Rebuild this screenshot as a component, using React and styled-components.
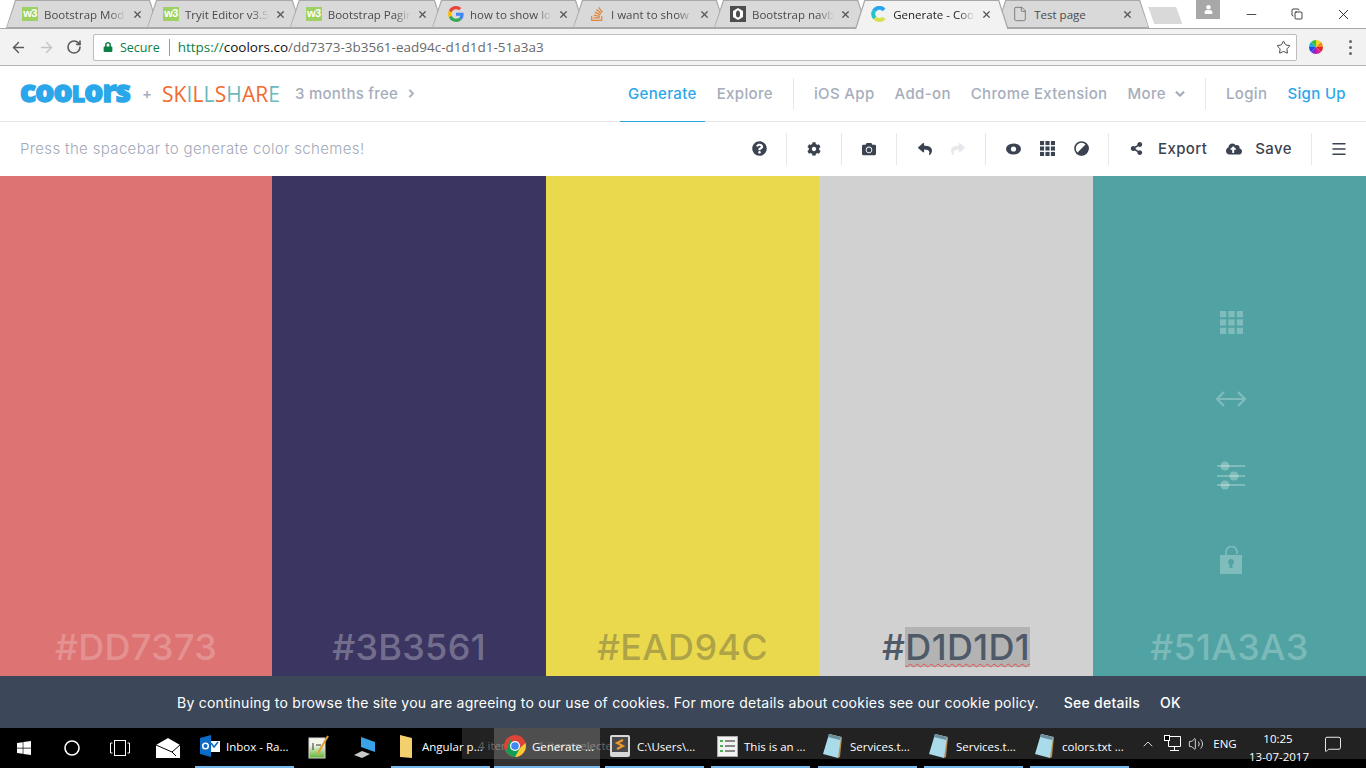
import React from "react";
import styled, { createGlobalStyle } from "styled-components";
import {
  ArrowLeft,
  ArrowRight,
  RotateCw,
  Star,
  File,
  X,
  Minus,
  Copy,
  ChevronUp,
  Volume2,
  MessageSquare,
  Menu,
} from "lucide-react";
import {
  FaQuestionCircle,
  FaCog,
  FaCamera,
  FaReply,
  FaShare,
  FaShareAlt,
  FaCloudUploadAlt,
  FaChevronRight,
  FaChevronDown,
  FaLock,
  FaWindows,
  FaUser,
  FaStackOverflow,
} from "react-icons/fa";

const GlobalStyle = createGlobalStyle`
  html, body {
    margin: 0;
    padding: 0;
    overflow: hidden;
    background: #fff;
  }
  * { box-sizing: border-box; }
`;

const Page = styled.div`
  width: 1366px;
  height: 768px;
  display: flex;
  flex-direction: column;
  font-family: Inter, "Liberation Sans", sans-serif;
`;

/* ---------- chrome window ---------- */
const TabStrip = styled.div`
  height: 28px;
  flex: none;
  display: flex;
  align-items: stretch;
  padding-left: 6px;
  background: #fff;
  position: relative;
  font-family: "Open Sans", "Liberation Sans", sans-serif;
`;

const Tab = styled.div`
  position: relative;
  flex: 0 0 153px;
  margin-right: -12px;
  padding: 0 16px;
  display: flex;
  align-items: center;
  gap: 6px;
  z-index: ${(p) => (p.$active ? 2 : 1)};
  font-size: 11.5px;
  color: ${(p) => (p.$active ? "#222" : "#4a4a4a")};

  &::before,
  &::after {
    content: "";
    position: absolute;
    z-index: -1;
    clip-path: polygon(0 100%, 9px 0, calc(100% - 9px) 0, 100% 100%);
  }
  &::before {
    inset: 0;
    background: #a8a8a8;
  }
  &::after {
    inset: 1px 1px ${(p) => (p.$active ? "-1px" : "1px")} 1px;
    background: ${(p) => (p.$active ? "#f2f2f2" : "#d9d9d9")};
  }
`;

const TabTitle = styled.span`
  flex: 1;
  min-width: 0;
  overflow: hidden;
  white-space: nowrap;
  mask-image: ${(p) =>
    p.$plain ? "none" : "linear-gradient(to right, #000 80%, transparent)"};
`;

const TabClose = styled(X)`
  flex: none;
  color: #555;
`;

const W3Icon = styled.span`
  flex: none;
  width: 16px;
  height: 14px;
  background: #9ed163;
  color: #fff;
  font: bold 11px "Liberation Sans", sans-serif;
  line-height: 13px;
  text-align: center;
  letter-spacing: -0.5px;
`;

const NewTab = styled.div`
  margin: 7px 0 4px 11px;
  width: 34px;
  height: 17px;
  flex: none;
  background: #d9d9d9;
  clip-path: polygon(0 0, calc(100% - 6px) 0, 100% 100%, 6px 100%);
`;

const ProfileBadge = styled.div`
  position: absolute;
  left: 1196px;
  top: 0;
  width: 24px;
  height: 19px;
  background: #a8a8a8;
  color: #fff;
  display: flex;
  align-items: center;
  justify-content: center;
`;

const WindowControls = styled.div`
  position: absolute;
  right: 0;
  top: 0;
  height: 28px;
  display: flex;
  align-items: center;
  color: #111;
`;

const WindowButton = styled.div`
  width: 46px;
  display: flex;
  justify-content: center;
`;

const Toolbar = styled.div`
  height: 38px;
  flex: none;
  background: #f2f2f2;
  border-top: 1px solid #a8a8a8;
  border-bottom: 1px solid #b5b5b5;
  display: flex;
  align-items: center;
  padding-left: 4px;
  color: #5a5a5a;
`;

const NavButton = styled.div`
  width: 28px;
  display: flex;
  justify-content: center;
  color: ${(p) => (p.$disabled ? "#c4c4c4" : "#5a5a5a")};
`;

const AddressBar = styled.div`
  margin-left: 5px;
  width: 1204px;
  height: 27px;
  background: #fff;
  border: 1px solid #bdbdbd;
  border-radius: 2px;
  display: flex;
  align-items: center;
  padding: 0 5px 0 9px;
  font-family: "Open Sans", "Liberation Sans", sans-serif;
  font-size: 12.5px;
`;

const Secure = styled.span`
  color: #0b8043;
  margin-left: 7px;
  padding-right: 9px;
  border-right: 1px solid #9a9a9a;
  line-height: 17px;
`;

const Url = styled.span`
  margin-left: 8px;
  color: #6a6a6a;
  flex: 1;
  font-size: 13.5px;
  & b {
    font-weight: 400;
    color: #0b8043;
  }
  & i {
    font-style: normal;
    color: #111;
  }
`;

const WheelSlot = styled.span`
  margin-left: 11px;
  display: flex;
`;

const MenuDots = styled.div`
  margin-left: 25px;
  display: flex;
  flex-direction: column;
  gap: 3px;
  & span {
    width: 3px;
    height: 3px;
    border-radius: 50%;
    background: #666;
  }
`;

/* ---------- coolors header ---------- */
const Header = styled.header`
  height: 56px;
  flex: none;
  border-bottom: 1px solid #e6e6e6;
  display: flex;
  align-items: center;
  padding-left: 20px;
  background: #fff;
  font-size: 15px;
  font-weight: 500;
  letter-spacing: 0.35px;
  color: #a6adbb;
`;

const Logo = styled.span`
  font-family: "Open Sans", sans-serif;
  font-weight: 800;
  font-size: 30px;
  line-height: 1;
  letter-spacing: -0.9px;
  color: #2aa7ea;
  -webkit-text-stroke: 1.3px #2aa7ea;
  width: 110px;
  margin-top: -6px;
  white-space: nowrap;
  & span {
    font-size: 23px;
    text-transform: uppercase;
  }
`;

const Plus = styled.span`
  margin-left: 12px;
  width: 20px;
`;

const SkillShare = styled.span`
  font-family: "Open Sans", sans-serif;
  font-size: 21px;
  font-weight: 500;
  letter-spacing: 0.1px;
  width: 133px;
  color: #f26b2d;
  & em {
    font-style: normal;
    color: #6db9bd;
  }
`;

const Promo = styled.span`
  display: flex;
  align-items: center;
  gap: 9px;
  letter-spacing: 0.25px;
  color: #a6adbb;
`;

const BoldChevron = styled(FaChevronRight)`
  stroke: currentColor;
  stroke-width: 40px;
`;

const BoldChevronDown = styled(FaChevronDown)`
  stroke: currentColor;
  stroke-width: 40px;
`;

const MainNav = styled.nav`
  margin-left: auto;
  align-self: stretch;
  display: flex;
  align-items: center;
  padding-right: 10px;
`;

const NavLink = styled.a`
  height: 100%;
  display: flex;
  align-items: center;
  gap: 9px;
  padding: 0 8px;
  margin: 0 2px;
  color: ${(p) => (p.$accent ? "#2aa7ea" : "#a6adbb")};
  border-bottom: ${(p) => (p.$active ? "1px solid #2aa7ea" : "none")};
  margin-bottom: ${(p) => (p.$active ? "-1px" : "0")};
`;

const NavDivider = styled.span`
  width: 1px;
  height: 32px;
  background: #e8e8e8;
  margin: 0 10px;
`;

const SubBar = styled.div`
  height: 54px;
  flex: none;
  background: #fff;
  display: flex;
  align-items: center;
  padding: 0 0 1px 20px;
  font-size: 15px;
  font-weight: 300;
  letter-spacing: 0.35px;
  color: #a3aaba;
`;

const ToolGroups = styled.div`
  margin-left: auto;
  height: 32px;
  display: flex;
  color: #3b4351;
`;

const ToolGroup = styled.div`
  width: ${(p) => p.$w}px;
  display: flex;
  align-items: center;
  justify-content: center;
  gap: ${(p) => p.$gap ?? 0}px;
  border-left: ${(p) => (p.$first ? "none" : "1px solid #e8e8e8")};
`;

const ExportGroup = styled.div`
  width: 203px;
  padding-left: 21px;
  display: flex;
  align-items: center;
  border-left: 1px solid #e8e8e8;
`;

const ToolLabel = styled.span`
  margin: 0 19px 0 ${(p) => p.$gap}px;
  font-size: 15px;
  font-weight: 500;
  letter-spacing: 0.4px;
  color: #3b4351;
`;

/* ---------- palette ---------- */
const Palette = styled.main`
  height: 500px;
  flex: none;
  display: grid;
  grid-template-columns: 272px 274px 273px 274px 273px;
`;

const Swatch = styled.section`
  background: ${(p) => p.$color};
  display: flex;
  flex-direction: column;
  align-items: center;
  padding-bottom: 9px;
`;

const SwatchTools = styled.div`
  margin: 130px 0 0 3px;
  display: flex;
  flex-direction: column;
  align-items: center;
  height: 280px;
  color: rgba(255, 255, 255, 0.28);
`;

const SwatchTool = styled.div`
  height: ${(p) => p.$h}px;
  flex: none;
  display: flex;
  align-items: center;
`;

const HexCode = styled.div`
  margin-top: auto;
  font-size: 36px;
  font-weight: 500;
  letter-spacing: 0.3px;
  line-height: 40px;
  color: ${(p) => p.$color};
`;

const Selected = styled.span`
  display: inline-block;
  background: #b3b3b3;
  text-decoration: underline wavy #e84b4b 1px;
  text-underline-offset: 3px;
`;

/* ---------- cookie bar ---------- */
const CookieBar = styled.div`
  height: 52px;
  flex: none;
  background: #3c4859;
  color: #fff;
  font-size: 14px;
  letter-spacing: 0.25px;
  display: flex;
  align-items: center;
  padding-left: 177px;
`;

const CookieAction = styled.span`
  margin-left: ${(p) => p.$gap}px;
  font-weight: 500;
`;

/* ---------- windows taskbar ---------- */
const Taskbar = styled.footer`
  height: 40px;
  flex: none;
  background: #000;
  position: relative;
  display: flex;
  align-items: stretch;
  color: #fff;
  font-family: "Open Sans", "Liberation Sans", sans-serif;
  font-size: 11.5px;
`;

const GhostStrip = styled.div`
  position: absolute;
  left: 462px;
  right: 0;
  top: 0;
  height: 31px;
  background: #222;
  color: #666;
  padding: 10px 0 0 16px;
  font-size: 11.5px;
  white-space: pre;
`;

const SystemButton = styled.div`
  position: relative;
  flex: none;
  width: 48px;
  display: flex;
  align-items: center;
  justify-content: center;
  padding-bottom: 1px;
`;

const TaskItem = styled.div`
  position: relative;
  flex: none;
  width: ${(p) => p.$w ?? 99}px;
  margin-left: ${(p) => p.$gap ?? 0}px;
  display: flex;
  align-items: center;
  gap: 6px;
  padding: 0 0 2px ${(p) => p.$pad ?? 6}px;
  white-space: nowrap;
  background: ${(p) => (p.$active ? "rgba(255,255,255,0.2)" : "transparent")};
  border-bottom: ${(p) => (p.$open ? "2px solid #76b9ed" : "none")};
`;

const Tray = styled.div`
  position: absolute;
  right: 7px;
  top: 0;
  height: 31px;
  display: flex;
  align-items: center;
`;

const TrayItem = styled.div`
  width: ${(p) => p.$w}px;
  display: flex;
  justify-content: center;
  text-align: center;
`;

const Clock = styled.div`
  width: 58px;
  margin: 9px 0 0 6px;
  text-align: center;
  line-height: 18px;
  white-space: nowrap;
`;

/* ---------- small drawings ---------- */
const GoogleIcon = () => (
  <svg width="16" height="16" viewBox="0 0 48 48" style={{ flex: "none" }}>
    <path fill="#EA4335" d="M24 9.5c3.5 0 6.700 1.300 9.100 3.500l6.800-6.800C35.800 2.400 30.300 0 24 0 14.600 0 6.500 5.400 2.600 13.200l7.900 6.100C12.400 13.600 17.700 9.500 24 9.500z" />
    <path fill="#4285F4" d="M46.900 24.500c0-1.600-.1-3.100-.4-4.500H24v9h12.900c-.6 3-2.300 5.500-4.800 7.200l7.700 6c4.500-4.200 7.100-10.300 7.100-17.700z" />
    <path fill="#FBBC05" d="M10.500 28.700C10 27.200 9.800 25.600 9.800 24s.3-3.200.7-4.700l-7.900-6.100C.9 16.500 0 20.100 0 24s.9 7.500 2.600 10.800l7.900-6.100z" />
    <path fill="#34A853" d="M24 48c6.500 0 11.900-2.100 15.900-5.800l-7.700-6c-2.100 1.400-4.900 2.300-8.200 2.300-6.300 0-11.600-4.100-13.500-9.800l-7.900 6.100C6.500 42.600 14.600 48 24 48z" />
  </svg>
);

const HexIcon = () => (
  <svg width="16" height="16" viewBox="0 0 16 16" style={{ flex: "none" }}>
    <rect width="16" height="16" fill="#4d4d4d" />
    <path d="M8 2l5 3v6l-5 3-5-3V5z" fill="#fff" />
    <ellipse cx="8" cy="8" rx="2" ry="3.500" fill="#4d4d4d" />
  </svg>
);

const CoolorsIcon = () => (
  <svg width="16" height="16" viewBox="0 0 16 16" fill="none" strokeWidth="4" style={{ flex: "none" }}>
    <path d="M13 4A6 6 0 0 0 3 5" stroke="#2aa7ea" />
    <path d="M3 5a6 6 0 0 0 1 7" stroke="#1fc4c8" />
    <path d="M4 12a6 6 0 0 0 9 0" stroke="#d6e04a" />
  </svg>
);

const ColorWheel = () => (
  <svg width="16" height="16" viewBox="0 0 16 16" style={{ flex: "none" }}>
    <path d="M8 8V1a7 7 0 0 1 5 2z" fill="#f4d422" />
    <path d="M8 8l5-5a7 7 0 0 1 2 5z" fill="#f08a1d" />
    <path d="M8 8h7a7 7 0 0 1-2 5z" fill="#e5242a" />
    <path d="M8 8l5 5a7 7 0 0 1-5 2z" fill="#d61f9c" />
    <path d="M8 8v7a7 7 0 0 1-5-2z" fill="#7a2bd6" />
    <path d="M8 8l-5 5a7 7 0 0 1-2-5z" fill="#2747e0" />
    <path d="M8 8H1a7 7 0 0 1 2-5z" fill="#1fa8e0" />
    <path d="M8 8L3 3a7 7 0 0 1 5-2z" fill="#35c13c" />
  </svg>
);

const SquareGrid = ({ size }) => (
  <svg width={size} height={size} viewBox="0 0 22 22" fill="currentColor">
    {[0, 8, 16].map((y) =>
      [0, 8, 16].map((x) => <rect key={`${x}-${y}`} x={x} y={y} width="6" height="6" />)
    )}
  </svg>
);

const EyeIcon = () => (
  <svg width="15" height="12" viewBox="0 0 15 12">
    <ellipse cx="7.500" cy="6" rx="7.500" ry="5.500" fill="currentColor" />
    <circle cx="7.500" cy="6" r="2.600" fill="#fff" />
  </svg>
);

const ContrastIcon = () => (
  <svg width="15" height="15" viewBox="0 0 15 15">
    <circle cx="7.500" cy="7.500" r="6.500" fill="none" stroke="currentColor" strokeWidth="1.600" />
    <path d="M12.500 2.500A7 7 0 0 1 2.500 12.500z" fill="currentColor" />
  </svg>
);

const ArrowsIcon = () => (
  <svg width="30" height="18" viewBox="0 0 30 18" fill="none" stroke="currentColor" strokeWidth="2.200">
    <path d="M1 9h28M8 2L1 9l7 7M22 2l7 7-7 7" />
  </svg>
);

const SlidersIcon = () => (
  <svg width="28" height="30" viewBox="0 0 28 30" fill="currentColor">
    <rect y="4" width="28" height="2" />
    <rect y="14" width="28" height="2" />
    <rect y="23" width="28" height="2" />
    <circle cx="8" cy="5" r="4.500" />
    <circle cx="17" cy="15" r="4.500" />
    <circle cx="8" cy="24" r="4.500" />
  </svg>
);

const OpenLockIcon = () => (
  <svg width="22" height="28" viewBox="0 0 22 28">
    <path d="M6 9V6a5.500 5.500 0 0 1 11 0v2" fill="none" stroke="currentColor" strokeWidth="1.600" />
    <path fillRule="evenodd" fill="currentColor" d="M0 9h22v19H0zM11 13a3 3 0 0 0-1.500 5.600V22h3v-3.400A3 3 0 0 0 11 13z" />
  </svg>
);

const MailIcon = () => (
  <svg width="24" height="20" viewBox="0 0 24 20">
    <path d="M0 7L12 0l12 7v13H0z" fill="#fff" />
    <path d="M0 7l16 7 8-7M16 14l4 4" fill="none" stroke="#000" strokeWidth="1" />
  </svg>
);

const OutlookIcon = () => (
  <svg width="20" height="22" viewBox="0 0 20 22" style={{ flex: "none" }}>
    <rect x="9" y="6" width="11" height="11" fill="#fff" />
    <path d="M11 8l3 4 4-5" fill="none" stroke="#0a6cc4" strokeWidth="1.500" />
    <path d="M0 3l11-3v22L0 19z" fill="#0a6cc4" />
    <circle cx="5.500" cy="11" r="2.800" fill="none" stroke="#fff" strokeWidth="1.500" />
  </svg>
);

const NotesIcon = () => (
  <svg width="22" height="24" viewBox="0 0 22 24" style={{ flex: "none" }}>
    <defs>
      <linearGradient id="notesFill" x1="0" y1="0" x2="0" y2="1">
        <stop offset="0.35" stopColor="#f2f5e8" />
        <stop offset="1" stopColor="#62b32e" />
      </linearGradient>
    </defs>
    <rect x="1" y="3" width="16" height="20" fill="url(#notesFill)" stroke="#d8d8d8" />
    <path d="M5 8v7M8 10h5" stroke="#333" />
    <path d="M10 18L20 1" stroke="#e0a030" strokeWidth="2" />
  </svg>
);

const LaptopIcon = () => (
  <svg width="24" height="24" viewBox="0 0 24 24" style={{ flex: "none" }}>
    <path d="M8 2l14 5v10L8 12z" fill="#39a3e8" />
    <path d="M1 20l8-4 8 3-8 4z" fill="#c9c9c9" />
  </svg>
);

const FolderIcon = () => (
  <svg width="14" height="26" viewBox="0 0 14 26" style={{ flex: "none" }}>
    <path d="M1 2l12 3v20l-12-1z" fill="#f3cf6d" />
  </svg>
);

const ChromeIcon = () => (
  <svg width="22" height="22" viewBox="0 0 22 22" style={{ flex: "none" }}>
    <circle cx="11" cy="11" r="11" fill="#db4437" />
    <path d="M2 16.500L6 4 11 11l10 2a11 11 0 0 1-10 9A11 11 0 0 1 2 16.500z" fill="#0f9d58" />
    <path d="M11 22l5-9 5.500-5A11 11 0 0 1 11 22z" fill="#fcc934" />
    <circle cx="11" cy="11" r="5" fill="#fff" />
    <circle cx="11" cy="11" r="3.800" fill="#4285f4" />
  </svg>
);

const SublimeIcon = () => (
  <svg width="22" height="24" viewBox="0 0 22 24" style={{ flex: "none" }}>
    <rect x="1" y="1" width="20" height="22" rx="2" fill="#d8d8d8" />
    <rect x="3" y="3" width="16" height="15" fill="#4a4a4a" />
    <path d="M14 6L8 9l6 3-6 3" fill="none" stroke="#f09a2c" strokeWidth="2" />
  </svg>
);

const ListIcon = () => (
  <svg width="21" height="21" viewBox="0 0 21 21" style={{ flex: "none" }}>
    <rect x="0.500" y="0.500" width="20" height="20" fill="#f3f3f3" stroke="#aaa" />
    <path d="M3 5h3M3 10h3M3 15h3" stroke="#4caf50" strokeWidth="2" />
    <path d="M8 5h10M8 10h10M8 15h10" stroke="#888" strokeWidth="2" />
  </svg>
);

const PadIcon = () => (
  <svg width="22" height="26" viewBox="0 0 22 26" style={{ flex: "none" }}>
    <path d="M7 1l13 3-2 20-2 1z" fill="#b98a4e" />
    <path d="M7 1l12 3-3 21L1 21z" fill="#a9dbea" />
    <path d="M7 1l12 3-1 3L6 4z" fill="#6c8e9c" />
  </svg>
);

const NetworkIcon = () => (
  <svg width="17" height="17" viewBox="0 0 17 17" fill="none" stroke="#fff">
    <path d="M4.500 1.500h12v10h-12zM10.500 11.500v4M6 15.500h9" />
    <rect x="0.500" y="0.500" width="5" height="5" fill="#000" />
  </svg>
);

const tabs = [
  { title: "Bootstrap Mod", icon: <W3Icon>w3</W3Icon> },
  { title: "Tryit Editor v3.5", icon: <W3Icon>w3</W3Icon> },
  { title: "Bootstrap Pagir", icon: <W3Icon>w3</W3Icon> },
  { title: "how to show lo", icon: <GoogleIcon /> },
  { title: "I want to show", icon: <FaStackOverflow size={16} color="#e0873a" style={{ flex: "none" }} /> },
  { title: "Bootstrap navb", icon: <HexIcon /> },
  { title: "Generate - Coo", icon: <CoolorsIcon />, active: true },
  { title: "Test page", icon: <File size={16} strokeWidth={1.2} color="#666" style={{ flex: "none" }} />, plain: true },
];

const swatches = [
  { color: "#dd7373", hex: "#DD7373", text: "rgba(255,255,255,0.24)" },
  { color: "#3b3561", hex: "#3B3561", text: "rgba(255,255,255,0.3)" },
  { color: "#ead94c", hex: "#EAD94C", text: "rgba(60,60,60,0.35)" },
  { color: "#d1d1d1", hex: "#D1D1D1", text: "#4f5a69", selected: true },
  { color: "#51a3a3", hex: "#51A3A3", text: "rgba(255,255,255,0.25)", tools: true },
];

const App = () => {
  return (
    <Page>
      <GlobalStyle />
      <TabStrip>
        {tabs.map((t) => (
          <Tab key={t.title} $active={t.active}>
            {t.icon}
            <TabTitle $plain={t.plain}>{t.title}</TabTitle>
            <TabClose size={11} strokeWidth={2.6} />
          </Tab>
        ))}
        <NewTab />
        <ProfileBadge>
          <FaUser size={9} />
        </ProfileBadge>
        <WindowControls>
          <WindowButton>
            <Minus size={15} strokeWidth={1.2} />
          </WindowButton>
          <WindowButton>
            <Copy size={12} strokeWidth={1.6} />
          </WindowButton>
          <WindowButton>
            <X size={17} strokeWidth={1.2} />
          </WindowButton>
        </WindowControls>
      </TabStrip>

      <Toolbar>
        <NavButton>
          <ArrowLeft size={17} strokeWidth={2} />
        </NavButton>
        <NavButton $disabled>
          <ArrowRight size={17} strokeWidth={2} />
        </NavButton>
        <NavButton>
          <RotateCw size={16} strokeWidth={2.4} />
        </NavButton>
        <AddressBar>
          <FaLock size={10} color="#0b8043" />
          <Secure>Secure</Secure>
          <Url>
            <b>https://</b>
            <i>coolors.co</i>/dd7373-3b3561-ead94c-d1d1d1-51a3a3
          </Url>
          <Star size={15} strokeWidth={1.6} color="#444" />
        </AddressBar>
        <WheelSlot>
          <ColorWheel />
        </WheelSlot>
        <MenuDots>
          <span />
          <span />
          <span />
        </MenuDots>
      </Toolbar>

      <Header>
        <Logo>
          coo<span>l</span>ors
        </Logo>
        <Plus>+</Plus>
        <SkillShare>
          SK<em>I</em>L<em>L</em>S<em>H</em>AR<em>E</em>
        </SkillShare>
        <Promo>
          3 months free <BoldChevron size={9} />
        </Promo>
        <MainNav>
          <NavLink $accent $active>
            Generate
          </NavLink>
          <NavLink>Explore</NavLink>
          <NavDivider />
          <NavLink>iOS App</NavLink>
          <NavLink>Add-on</NavLink>
          <NavLink>Chrome Extension</NavLink>
          <NavLink>
            More <BoldChevronDown size={10} />
          </NavLink>
          <NavDivider />
          <NavLink>Login</NavLink>
          <NavLink $accent>Sign Up</NavLink>
        </MainNav>
      </Header>

      <SubBar>
        Press the spacebar to generate color schemes!
        <ToolGroups>
          <ToolGroup $first $w={54}>
            <FaQuestionCircle size={15} />
          </ToolGroup>
          <ToolGroup $w={55}>
            <FaCog size={14} />
          </ToolGroup>
          <ToolGroup $w={55}>
            <FaCamera size={14} />
          </ToolGroup>
          <ToolGroup $w={89} $gap={19}>
            <FaReply size={14} />
            <FaShare size={14} color="#e6e8ec" />
          </ToolGroup>
          <ToolGroup $w={123} $gap={19}>
            <EyeIcon />
            <SquareGrid size={15} />
            <ContrastIcon />
          </ToolGroup>
          <ExportGroup>
            <FaShareAlt size={13} />
            <ToolLabel $gap={15}>Export</ToolLabel>
            <FaCloudUploadAlt size={16} />
            <ToolLabel $gap={13}>Save</ToolLabel>
          </ExportGroup>
          <ToolGroup $w={55}>
            <Menu size={18} strokeWidth={1.9} />
          </ToolGroup>
        </ToolGroups>
      </SubBar>

      <Palette>
        {swatches.map((s) => (
          <Swatch key={s.hex} $color={s.color}>
            {s.tools && (
              <SwatchTools>
                <SwatchTool $h={32}>
                  <SquareGrid size={23} />
                </SwatchTool>
                <SwatchTool $h={122}>
                  <ArrowsIcon />
                </SwatchTool>
                <SwatchTool $h={32}>
                  <SlidersIcon />
                </SwatchTool>
                <SwatchTool $h={136}>
                  <OpenLockIcon />
                </SwatchTool>
              </SwatchTools>
            )}
            <HexCode $color={s.text}>
              {s.selected ? (
                <>
                  #<Selected>D1D1D1</Selected>
                </>
              ) : (
                s.hex
              )}
            </HexCode>
          </Swatch>
        ))}
      </Palette>

      <CookieBar>
        By continuing to browse the site you are agreeing to our use of cookies. For more details about cookies see our cookie policy.
        <CookieAction $gap={25}>See details</CookieAction>
        <CookieAction $gap={20}>OK</CookieAction>
      </CookieBar>

      <Taskbar>
        <GhostStrip>4 items       1 item selected</GhostStrip>
        <SystemButton>
          <FaWindows size={16} />
        </SystemButton>
        <SystemButton>
          <svg width="16" height="16" viewBox="0 0 16 16" fill="none" stroke="#fff" strokeWidth="1.600">
            <circle cx="8" cy="8" r="7" />
          </svg>
        </SystemButton>
        <SystemButton>
          <svg width="20" height="16" viewBox="0 0 20 16" fill="none" stroke="#fff">
            <rect x="4.500" y="0.500" width="11" height="15" />
            <path d="M2.500 3H.5v10h2M17.500 3h2v10h-2" />
          </svg>
        </SystemButton>
        <SystemButton>
          <MailIcon />
        </SystemButton>
        <TaskItem $gap={3} $open $pad={5}>
          <OutlookIcon /> Inbox - Ra...
        </TaskItem>
        <TaskItem $w={46} $gap={2} $pad={12}>
          <NotesIcon />
        </TaskItem>
        <TaskItem $w={46} $pad={11}>
          <LaptopIcon />
        </TaskItem>
        <TaskItem $gap={3} $open $pad={8}>
          <FolderIcon /> &nbsp;Angular p...
        </TaskItem>
        <TaskItem $gap={4} $w={106} $active $open $pad={10}>
          <ChromeIcon /> Generate ...
        </TaskItem>
        <TaskItem $gap={5} $open $pad={4}>
          <SublimeIcon /> C:\Users\...
        </TaskItem>
        <TaskItem $gap={7} $open $pad={6}>
          <ListIcon /> This is an ...
        </TaskItem>
        <TaskItem $gap={8} $open $pad={4}>
          <PadIcon /> Services.t...
        </TaskItem>
        <TaskItem $gap={7} $open $pad={4}>
          <PadIcon /> Services.t...
        </TaskItem>
        <TaskItem $gap={7} $open $pad={4}>
          <PadIcon /> colors.txt ...
        </TaskItem>
        <Tray>
          <TrayItem $w={24}>
            <ChevronUp size={16} strokeWidth={1.2} />
          </TrayItem>
          <TrayItem $w={24}>
            <NetworkIcon />
          </TrayItem>
          <TrayItem $w={23}>
            <Volume2 size={16} strokeWidth={1.2} />
          </TrayItem>
          <TrayItem $w={36}>ENG</TrayItem>
          <Clock>
            10:25
            <br />
            13-07-2017
          </Clock>
          <TrayItem $w={52}>
            <MessageSquare size={18} strokeWidth={1.2} />
          </TrayItem>
        </Tray>
      </Taskbar>
    </Page>
  );
};

export default App;
